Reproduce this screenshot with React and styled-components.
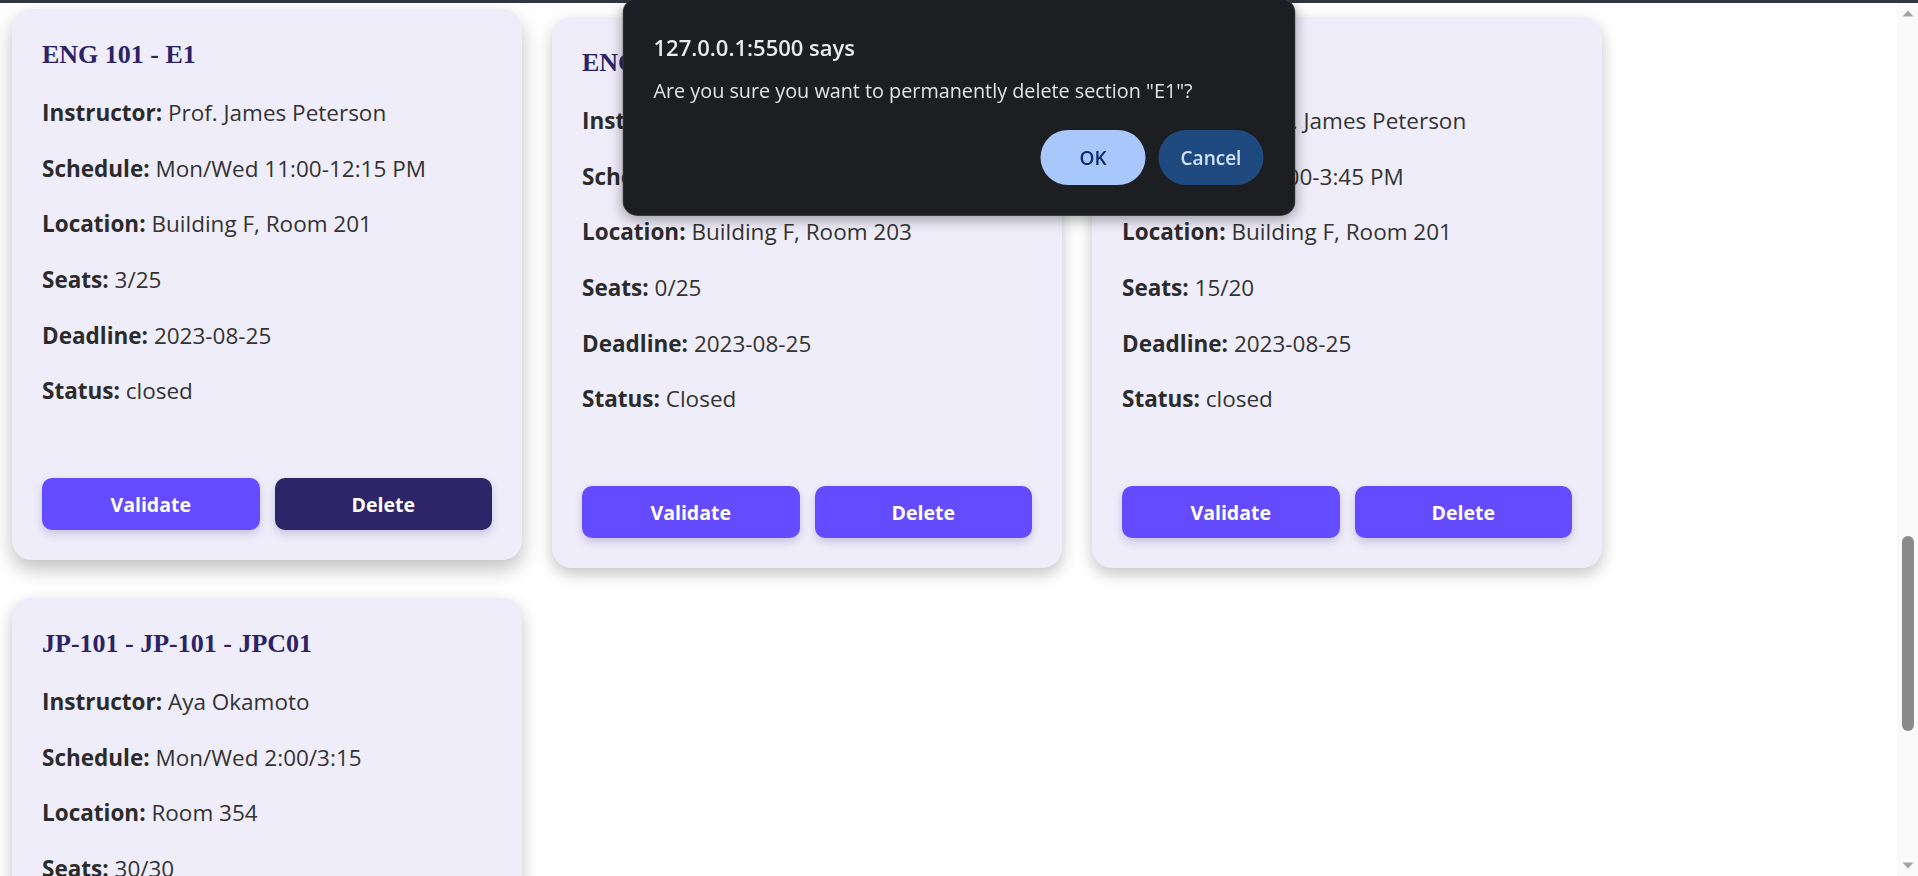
import React from 'react';
import styled, { createGlobalStyle, css } from 'styled-components';

const GlobalStyle = createGlobalStyle`
  html {
    scrollbar-width: none;
  }

  body {
    margin: 0;
    background: #fff;
    font-family: 'Open Sans', 'Noto Sans', sans-serif;
    color: #333;
  }
`;

const TopBar = styled.div`
  position: relative;
  z-index: 3;
  height: 3px;
  background: #2f3541;
`;

const Grid = styled.div`
  display: grid;
  grid-template-columns: repeat(3, 510px);
  gap: 30px;
  padding: 14px 12px 30px;
`;

const Card = styled.div`
  display: flex;
  flex-direction: column;
  box-sizing: border-box;
  min-height: 551px;
  padding: 30px;
  border-radius: 20px;
  background-color: #f0edfa;
  box-shadow: 0 6px 16px rgba(0, 0, 0, 0.24);
  transition: transform 200ms;
  ${p =>
    p.$hovered &&
    css`
      transform: translateY(-8px);
      box-shadow: 0 9px 20px rgba(0, 0, 0, 0.25);
    `}
`;

const Title = styled.h3`
  margin: 0 0 25px;
  font-family: 'Liberation Serif', 'Times New Roman', serif;
  font-size: 26px;
  line-height: 32px;
  font-weight: 700;
  color: #2c2366;
`;

const Fields = styled.div`
  display: flex;
  flex-direction: column;
  gap: 21.7px;
`;

const Field = styled.p`
  margin: 0;
  font-size: 22.5px;
  line-height: 34px;
  color: #333;

  > strong {
    font-weight: 700;
    color: #2b2b2b;
  }
`;

const Actions = styled.div`
  display: flex;
  gap: 15px;
  margin-top: auto;
`;

const ActionButton = styled.button`
  flex: 1;
  height: 52px;
  border: none;
  border-radius: 10px;
  background-color: ${p => (p.$active ? '#2e2468' : '#654bff')};
  box-shadow: 0 4px 8px rgba(60, 40, 140, 0.22);
  color: #fff;
  font-family: 'Open Sans', sans-serif;
  font-size: 19.5px;
  font-weight: 700;
  cursor: pointer;
`;

const Dialog = styled.div`
  position: fixed;
  z-index: 5;
  top: -2px;
  left: 50%;
  transform: translateX(-50%);
  box-sizing: border-box;
  width: 673px;
  height: 218px;
  padding: 33px 31px 30px 30px;
  border-radius: 15px;
  border: 1px solid rgba(255, 255, 255, 0.14);
  background-color: #1c1e22;
  box-shadow: 0 4px 14px rgba(0, 0, 0, 0.35);
  display: flex;
  flex-direction: column;
  font-family: 'Open Sans', sans-serif;
`;

const DialogTitle = styled.div`
  font-size: 22px;
  line-height: 30px;
  font-weight: 600;
  color: #e8eaed;
`;

const DialogMessage = styled.div`
  margin-top: 16px;
  font-size: 19.8px;
  line-height: 26px;
  color: #e3e3e3;
`;

const DialogActions = styled.div`
  display: flex;
  justify-content: flex-end;
  gap: 13px;
  margin-top: auto;
`;

const DialogButton = styled.button`
  width: 105px;
  height: 55px;
  border: none;
  border-radius: 28px;
  font-family: 'Open Sans', sans-serif;
  font-size: 19px;
  font-weight: 600;
  background-color: ${p => (p.$primary ? '#a8c7fa' : '#1f4a7f')};
  color: ${p => (p.$primary ? '#062e6f' : '#d3e3fd')};
`;

// window scrollbar, drawn since the headless browser hides the native one
const ScrollTrack = styled.div`
  position: fixed;
  z-index: 2;
  top: 3px;
  right: 0;
  bottom: 0;
  width: 21px;
  display: flex;
  flex-direction: column;
  background-color: #fafafa;
`;

const ScrollArrow = styled.div`
  height: 21px;
  display: flex;
  align-items: center;
  justify-content: center;

  > svg {
    width: 12px;
    height: 7px;
    fill: #a3a3a3;
  }
`;

const ScrollArea = styled.div`
  flex: 1;
  display: flex;
  flex-direction: column;
  align-items: center;
`;

const ScrollThumb = styled.div`
  width: 12px;
  border-radius: 6px;
  background-color: #8a8a8a;
`;

const Scrollbar = ({ offset, size }) => (
  <ScrollTrack>
    <ScrollArrow>
      <svg viewBox="0 0 12 7">
        <path d="M6 0.5 L11.5 6.5 H0.5 Z" />
      </svg>
    </ScrollArrow>
    <ScrollArea>
      <ScrollThumb style={{ marginTop: offset, height: size }} />
    </ScrollArea>
    <ScrollArrow>
      <svg viewBox="0 0 12 7">
        <path d="M6 6.5 L11.5 0.5 H0.5 Z" />
      </svg>
    </ScrollArrow>
  </ScrollTrack>
);

const sections = [
  {
    title: 'ENG 101 - E1',
    instructor: 'Prof. James Peterson',
    schedule: 'Mon/Wed 11:00-12:15 PM',
    location: 'Building F, Room 201',
    seats: '3/25',
    deadline: '2023-08-25',
    status: 'closed',
    hovered: true,
  },
  {
    title: 'ENG 101 - E2',
    instructor: 'Prof. James Peterson',
    schedule: 'Mon/Wed 2:00-3:15 PM',
    location: 'Building F, Room 203',
    seats: '0/25',
    deadline: '2023-08-25',
    status: 'Closed',
  },
  {
    title: 'ENG 101 - E3',
    instructor: 'Prof. James Peterson',
    schedule: 'Fri 2:00-3:45 PM',
    location: 'Building F, Room 201',
    seats: '15/20',
    deadline: '2023-08-25',
    status: 'closed',
  },
  {
    title: 'JP-101 - JP-101 - JPC01',
    instructor: 'Aya Okamoto',
    schedule: 'Mon/Wed 2:00/3:15',
    location: 'Room 354',
    seats: '30/30',
    deadline: '2023-08-25',
    status: 'open',
  },
];

const SectionCard = ({ section }) => (
  <Card $hovered={section.hovered}>
    <Title>{section.title}</Title>
    <Fields>
      <Field>
        <strong>Instructor:</strong> {section.instructor}
      </Field>
      <Field>
        <strong>Schedule:</strong> {section.schedule}
      </Field>
      <Field>
        <strong>Location:</strong> {section.location}
      </Field>
      <Field>
        <strong>Seats:</strong> {section.seats}
      </Field>
      <Field>
        <strong>Deadline:</strong> {section.deadline}
      </Field>
      <Field>
        <strong>Status:</strong> {section.status}
      </Field>
    </Fields>
    <Actions>
      <ActionButton type="button">Validate</ActionButton>
      <ActionButton type="button" $active={section.hovered}>
        Delete
      </ActionButton>
    </Actions>
  </Card>
);

const App = () => (
  <>
    <GlobalStyle />
    <TopBar />
    <Grid>
      {sections.map(s => (
        <SectionCard key={s.title} section={s} />
      ))}
    </Grid>
    <Scrollbar offset={512} size={195} />
    <Dialog role="alertdialog">
      <DialogTitle>127.0.0.1:5500 says</DialogTitle>
      <DialogMessage>
        Are you sure you want to permanently delete section "E1"?
      </DialogMessage>
      <DialogActions>
        <DialogButton type="button" $primary>
          OK
        </DialogButton>
        <DialogButton type="button">Cancel</DialogButton>
      </DialogActions>
    </Dialog>
  </>
);

export default App;
